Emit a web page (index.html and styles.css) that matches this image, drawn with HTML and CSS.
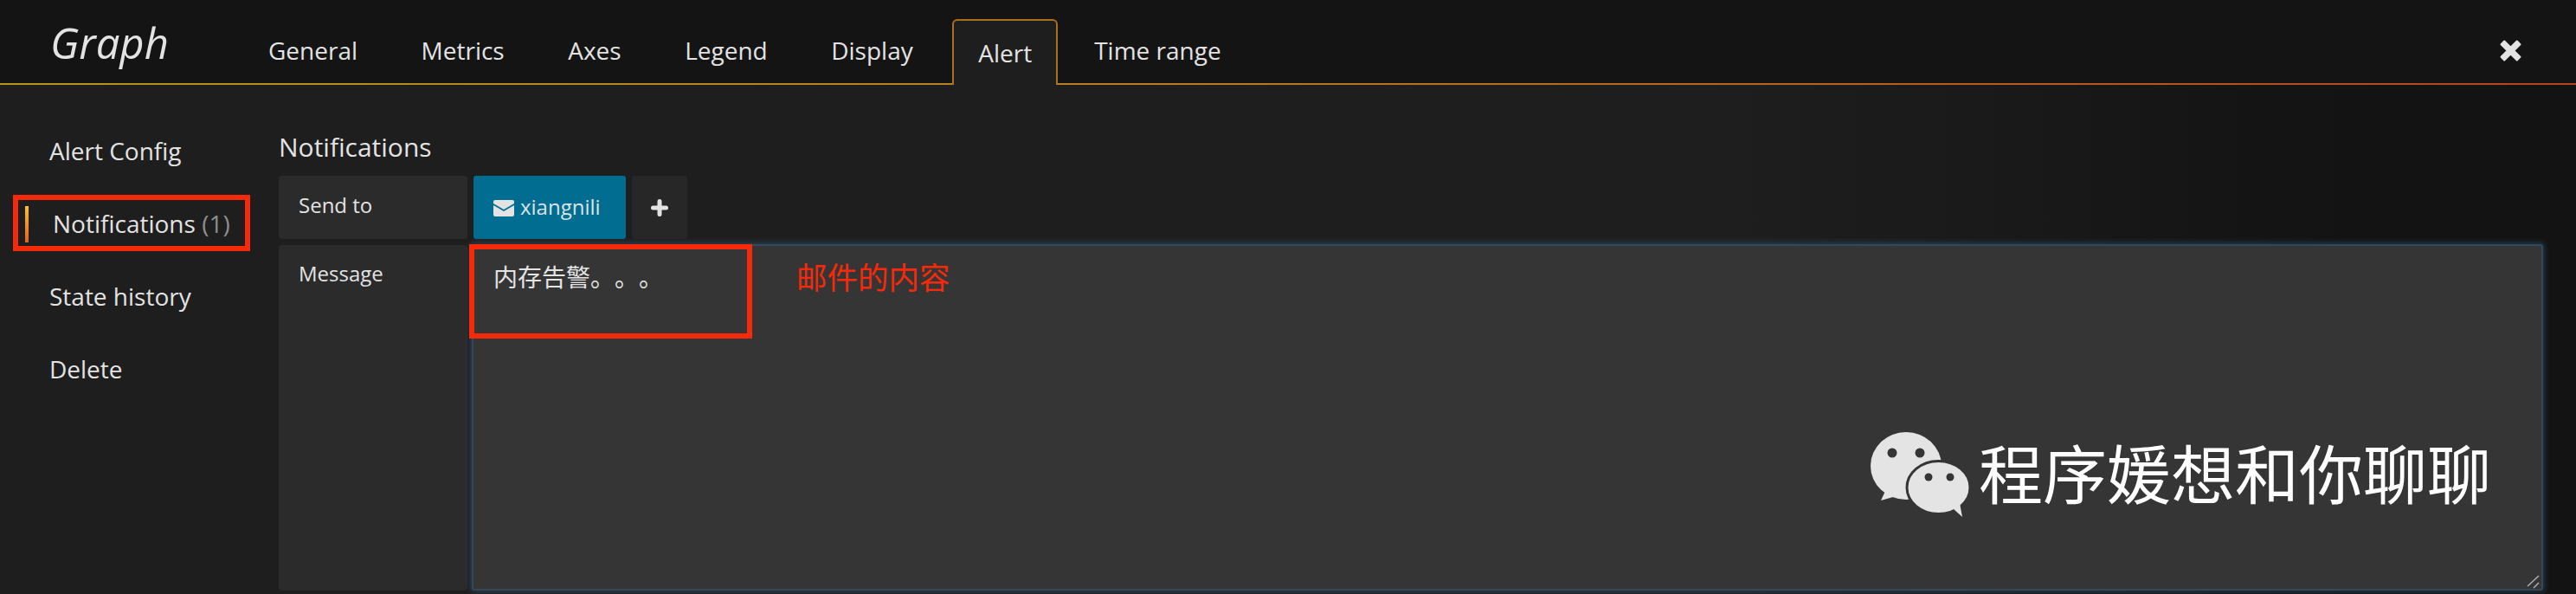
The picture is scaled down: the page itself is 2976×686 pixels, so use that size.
FILE: index.html
```html
<!DOCTYPE html>
<html lang="en">
<head>
<meta charset="utf-8">
<title>Graph</title>
<link rel="stylesheet" href="styles.css">
</head>
<body>
<header class="head">
  <div class="title">Graph</div>
  <nav class="tabs">
    <a class="tab">General</a>
    <a class="tab">Metrics</a>
    <a class="tab">Axes</a>
    <a class="tab">Legend</a>
    <a class="tab">Display</a>
    <a class="tab active">Alert</a>
    <a class="tab">Time range</a>
  </nav>
  <svg class="close" viewBox="0 0 24 24"><path d="M5 1.500 12 8.500 19 1.500 22.500 5 15.500 12 22.500 19 19 22.500 12 15.500 5 22.500 1.500 19 8.500 12 1.500 5Z" fill="#e3e3e3" stroke="#e3e3e3" stroke-width="2" stroke-linejoin="round"/></svg>
</header>
<main class="body">
  <aside class="side">
    <div class="side-item">Alert Config</div>
    <div class="side-item current"><span class="bar"></span>Notifications <span class="count">(1)</span></div>
    <div class="side-item">State history</div>
    <div class="side-item">Delete</div>
  </aside>
  <section class="panel">
    <h2 class="panel-title">Notifications</h2>
    <div class="row">
      <div class="label">Send to</div>
      <div class="chip">
        <svg class="mail" viewBox="0 0 24 19"><path d="M2 0H22A2 2 0 0 1 24 2V4L12 11 0 4V2A2 2 0 0 1 2 0Z" fill="#e3e3e3"/><path d="M0 6 12 13 24 6V17A2 2 0 0 1 22 19H2A2 2 0 0 1 0 17Z" fill="#e3e3e3"/></svg>
        <span>xiangnili</span>
      </div>
      <div class="add"><svg viewBox="0 0 20 20"><path d="M10 2.500V17.500M2.500 10H17.500" stroke="#e3e3e3" stroke-width="5" stroke-linecap="round"/></svg></div>
    </div>
    <div class="row grow">
      <div class="label msg">Message</div>
      <div class="textarea">
        <div class="msg-text">内存告警。。。</div>
        <div class="box-red"></div>
        <div class="note">邮件的内容</div>
        <div class="mark">
          <svg class="wechat" viewBox="0 0 116 98">
            <ellipse cx="42" cy="39" rx="41" ry="39" fill="#e4e4e4"/>
            <path d="M19 66 13 79 34 73Z" fill="#e4e4e4"/>
            <circle cx="26" cy="24" r="5.500" fill="#353535"/>
            <circle cx="58" cy="24" r="5.500" fill="#353535"/>
            <ellipse cx="79.500" cy="64" rx="36.500" ry="30.500" fill="#e4e4e4" stroke="#353535" stroke-width="3"/>
            <path d="M97 89 107 98 104 82Z" fill="#e4e4e4"/>
            <circle cx="68" cy="52" r="4.500" fill="#353535"/>
            <circle cx="93" cy="52" r="4.500" fill="#353535"/>
          </svg>
          <span class="mark-text">程序媛想和你聊聊</span>
        </div>
        <svg class="grip" viewBox="0 0 16 16"><path d="M2 13 15 1M9 15 15 9" stroke="#b0b0b0" stroke-width="1.500"/></svg>
      </div>
    </div>
  </section>
</main>
</body>
</html>
```
FILE: styles.css
```css
* { box-sizing: border-box; }
html, body { margin: 0; height: 686px; overflow: hidden; }
body {
  background: linear-gradient(90deg, #1f1e1e 0, #1f1e1e 2000px, #131313 2700px);
  color: #e3e3e3;
  font-family: "Open Sans", "Noto Sans CJK SC", sans-serif;
  font-size: 28px;
  display: flex;
  flex-direction: column;
}
.head {
  height: 98px;
  flex: none;
  background: #141414;
  border-bottom: 2px solid;
  border-image: linear-gradient(90deg, #b8941c, #bb7a22 47%, #b5451e) 1;
  display: flex;
  padding-left: 58px;
  padding-right: 63px;
}
.title {
  font-style: italic;
  font-size: 49px;
  line-height: 50px;
  margin-top: 24px;
  width: 252px;
  flex: none;
}
.tabs { display: flex; align-items: flex-start; }
.tab {
  line-height: 38px;
  margin-top: 39px;
  margin-right: 73.500px;
  white-space: nowrap;
}
.tab.active {
  height: 76px;
  margin-top: 22px;
  margin-right: 42px;
  margin-left: -28px;
  padding: 18px 28px 0;
  background: #1f1e1e;
  border: 2px solid #a86f1e;
  border-bottom: 0;
  border-radius: 6px 6px 0 0;
}
.close { width: 25px; height: 25px; margin-left: auto; margin-top: 46px; }
.body { flex: 1; display: flex; min-height: 0; }
.side { width: 322px; flex: none; padding: 54px 0 0 57px; }
.side-item { height: 84px; line-height: 44px; white-space: nowrap; }
.side-item.current { position: relative; padding-left: 4px; }
.side-item.current::after {
  content: "";
  box-sizing: border-box;
  position: absolute;
  left: -42px;
  top: -11px;
  width: 274px;
  height: 65px;
  border: 6px solid #f52a0a;
}
.bar {
  position: absolute;
  left: -28px;
  top: 2px;
  width: 4px;
  height: 42px;
  background: linear-gradient(#ffc01f, #e8601a);
}
.count { color: #8e8e8e; }
.panel { flex: 1; min-width: 0; display: flex; flex-direction: column; padding-right: 38px; padding-bottom: 4px; }
.panel-title { margin: 51px 0 12px; font-size: 30px; font-weight: 400; line-height: 42px; height: 42px; }
.row { display: flex; gap: 7px; height: 73px; flex: none; margin-bottom: 7px; }
.row.grow { flex: 1; margin-bottom: 0; height: auto; min-height: 0; }
.label {
  width: 218px;
  flex: none;
  background: #2b2b2b;
  border-radius: 4px;
  padding-left: 23px;
  font-size: 24px;
  line-height: 68px;
}
.label.msg { line-height: 66px; }
.chip {
  width: 176px;
  background: #006d91;
  border-radius: 3px;
  display: flex;
  align-items: center;
  padding: 0 0 2px 23px;
  gap: 7px;
  font-size: 24px;
  color: #dbe3e7;
}
.mail { width: 24px; height: 19px; margin-top: 3px; }
.add {
  width: 64px;
  background: #272727;
  border-radius: 3px;
  display: flex;
  align-items: center;
  justify-content: center;
}
.add svg { width: 20px; height: 20px; }
.textarea {
  flex: 1;
  position: relative;
  background: #353535;
  border: 2px solid #33485a;
  box-shadow: 0 0 6px 2px rgba(60, 110, 150, 0.4);
  margin: -1px 0 0 -2px;
  border-radius: 3px;
  min-width: 0;
}
.msg-text {
  font-size: 28px;
  line-height: 36px;
  padding: 18px 0 0 23px;
  text-spacing-trim: space-all;
}
.box-red {
  position: absolute;
  left: -5px;
  top: -2px;
  width: 327px;
  height: 109px;
  border: 6px solid #f52a0a;
}
.note {
  position: absolute;
  left: 373px;
  top: 13px;
  font-size: 35.500px;
  line-height: 46px;
  color: #f52a0a;
}
.mark {
  position: absolute;
  left: 1613px;
  top: 215px;
  display: flex;
  align-items: center;
  gap: 10px;
  color: #fff;
}
.wechat { width: 116px; height: 98px; flex: none; }
.mark-text { font-size: 74px; line-height: 98px; white-space: nowrap; }
.grip { position: absolute; right: 2px; bottom: 0; width: 16px; height: 16px; }
```
